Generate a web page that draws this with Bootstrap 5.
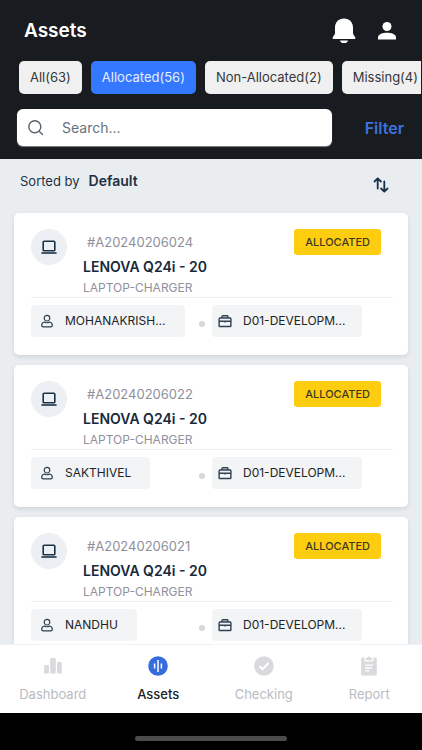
<!DOCTYPE html>
<html lang="en">
<head>
<meta charset="utf-8">
<meta name="viewport" content="width=device-width, initial-scale=1">
<title>Assets</title>
<link href="https://cdn.jsdelivr.net/npm/bootstrap@5.3.0/dist/css/bootstrap.min.css" rel="stylesheet">
<style>
body { font-family: Inter, "Liberation Sans", sans-serif; background: #e9edf0; color: #1d3144; }
.app-header { background: #181b1f; padding: 16px 0 13px; }
.app-title { font-size: 19px; font-weight: 600; line-height: 28px; color: #fff; }
.title-row { padding: 0 25px 0 24px; height: 29px; }
.title-actions { gap: 18px; }
.tabs { gap: 9px; padding: 0 0 0 19px; margin: 16px 1px 15px 0; overflow-x: auto; scrollbar-width: none; }
.tabs::-webkit-scrollbar { display: none; }
.tab { height: 33px; padding: 0 11px; border: 0; border-radius: 5px; background: #f0f0f0; color: #35373a; font-size: 13px; white-space: nowrap; flex: none; }
.tab.selected { background: #3478ff; color: #e6eeff; }
.search-row { padding: 0 18px 0 17px; }
.search-box { height: 37px; background: #fff; border-radius: 6px; padding: 0 10px; box-shadow: 0 1px 1px #7d8889; }
.search-box input { border: 0; outline: 0; width: 100%; min-width: 0; padding: 0; margin-left: 18px; font-size: 14px; color: #535b65; background: transparent; }
.search-box input::placeholder { color: #69717b; opacity: 1; }
.filter-link { font-size: 16px; font-weight: 600; color: #3f72dd; text-decoration: none; margin-left: 33px; }
.sort-row { padding: 11px 33px 19px 20px; font-size: 13px; }
.sort-row strong { font-size: 14px; font-weight: 600; margin-left: 9px; }
.sort-button { padding-top: 6px; }
.asset-list { min-height: 0; overflow: hidden; }
.cards { gap: 10px; padding: 0 14px; }
.asset { background: #fff; border-radius: 5px; padding: 16px 15px 18px 17px; box-shadow: 0 2px 4px #cfd5da; }
.device { width: 36px; height: 36px; background: #ecf0f5; border-radius: 50%; margin-right: 16px; }
.asset-id { font-size: 13px; line-height: 26px; color: #90909d; padding-left: 4px; }
.asset-name { font-size: 14px; line-height: 23px; font-weight: 600; margin: 0; color: #17293a; }
.asset-kind { font-size: 12px; line-height: 19px; color: #90909d; }
.state { height: 26px; padding: 0 11px; margin-right: 12px; border-radius: 3px; background: #ffcd10; color: #3b3a20; font-size: 11px; font-weight: 500; }
.asset-foot { border-top: 1px solid #eceef0; padding-top: 7px; }
.person-cell { width: 168px; }
.chip { height: 32px; border-radius: 4px; background: #f3f4f6; color: #202429; font-size: 12px; padding: 0 19px 0 9px; }
.chip svg { margin-right: 11px; color: #2c4054; }
.dept { padding: 0 16px 0 6px; }
.dot { width: 6px; height: 6px; margin: 6px 7px 0 0; border-radius: 50%; background: #d8d8d8; }
.bottom-nav { background: #fff; border-top: 1px solid #f0f1f3; height: 69px; }
.bottom-nav a { color: #b9bbc1; font-size: 13px; line-height: 20px; text-decoration: none; padding-top: 11px; gap: 8px; flex: 1 1 0; }
.bottom-nav a.current { color: #202226; font-weight: 500; }
.home-area { background: #000; height: 37px; padding-top: 13px; }
.home-bar { width: 36%; height: 5px; border-radius: 3px; background: #4b4b4b; }
</style>
</head>
<body>
<svg class="d-none" aria-hidden="true">
  <symbol id="laptop" viewBox="0 0 16 14"><path d="M2.200 10V2.200q0-1 1-1h9.600q1 0 1 1V10q0 .8-1 .8H3.200q-1 0-1-.8z" fill="none" stroke="currentColor" stroke-width="1.600"/><path d="M.4 13h15.200" stroke="currentColor" stroke-width="1.600"/></symbol>
  <symbol id="person" viewBox="0 0 14 14"><circle cx="7" cy="4.200" r="2.800" fill="none" stroke="currentColor" stroke-width="1.200"/><path d="M4.600 8C2.800 8.400 1.700 9.500 1.700 10.900c0 1.100.8 1.900 1.900 1.900h6.800c1.100 0 1.900-.8 1.900-1.900 0-1.400-1.100-2.500-2.900-2.900Q7 9.500 4.600 8z" fill="none" stroke="currentColor" stroke-width="1.200"/></symbol>
  <symbol id="briefcase" viewBox="0 0 14 14"><path d="M1.900 4h10.200q.8 0 .8.800v6.900q0 .8-.8.800H1.900q-.8 0-.8-.8V4.800q0-.8.800-.8zM4 3.800V2.600q0-.9.900-.9h4.200q.9 0 .9.900v1.200M1.200 7.200h11.600M7 6.600v2" fill="none" stroke="currentColor" stroke-width="1.400"/></symbol>
</svg>
<div class="d-flex flex-column vh-100">
  <header class="app-header">
    <div class="title-row d-flex align-items-center justify-content-between">
      <h1 class="app-title mb-0">Assets</h1>
      <div class="title-actions d-flex align-items-center">
        <button class="btn p-0 border-0 d-flex" aria-label="Notifications"><svg width="30" height="28" viewBox="0 0 30 28" fill="#fff"><path d="M15 1.500c-5.500 0-9 3.900-9 8.900v5.600c0 2.300-2.400 3.300-2.400 5 0 .7.500 1 1.200 1h20.400c.7 0 1.200-.3 1.200-1 0-1.700-2.400-2.700-2.400-5v-5.600c0-5-3.500-8.900-9-8.900zM10.900 23.500h8.200c-.4 1.700-2 2.600-4.100 2.600s-3.700-.9-4.100-2.600z"/></svg></button>
        <button class="btn p-0 border-0 d-flex" aria-label="Profile"><svg width="20" height="20" viewBox="0 0 20 20" fill="#fff"><circle cx="10" cy="5.500" r="4.500"/><path d="M1 18.500v-2.200c0-3.200 5-4.600 9-4.600s9 1.400 9 4.600v2.200z"/></svg></button>
      </div>
    </div>
    <div class="tabs d-flex">
      <button class="tab">All(63)</button>
      <button class="tab selected">Allocated(56)</button>
      <button class="tab">Non-Allocated(2)</button>
      <button class="tab">Missing(4)</button>
    </div>
    <div class="search-row d-flex align-items-center">
      <label class="search-box d-flex align-items-center flex-grow-1">
        <svg class="flex-shrink-0" width="17" height="17" viewBox="0 0 17 17" fill="none" stroke="#59616b" stroke-width="1.400"><circle cx="7.800" cy="7.800" r="6"/><path d="M12.200 12.200l3.300 3.300" stroke-linecap="round"/></svg>
        <input type="text" placeholder="Search..." aria-label="Search">
      </label>
      <a class="filter-link" href="#">Filter</a>
    </div>
  </header>
  <main class="asset-list flex-grow-1">
    <div class="sort-row d-flex">
      <div class="me-auto">Sorted by<strong>Default</strong></div>
      <button class="sort-button btn px-0 pb-0 border-0 d-flex" aria-label="Change sort order"><svg width="16" height="18" viewBox="0 0 16 18" fill="none" stroke="#17304c" stroke-width="1.800" stroke-linecap="round" stroke-linejoin="round"><path d="M4.700 12.500V2.500M1.500 5.500l3.200-3.200 3.200 3.200M11.300 5.500v10M8.100 12.500l3.200 3.200 3.200-3.200"/></svg></button>
    </div>
    <div class="cards d-flex flex-column">
      <article class="asset">
        <div class="d-flex align-items-start">
          <div class="device d-flex align-items-center justify-content-center"><svg width="16" height="14"><use href="#laptop"/></svg></div>
          <div class="me-auto"><div class="asset-id">#A20240206024</div><h2 class="asset-name">LENOVA Q24i - 20</h2><div class="asset-kind">LAPTOP-CHARGER</div></div>
          <span class="state d-flex align-items-center">ALLOCATED</span>
        </div>
        <div class="asset-foot d-flex align-items-center">
          <div class="person-cell d-flex"><span class="chip d-flex align-items-center"><svg width="14" height="14"><use href="#person"/></svg>MOHANAKRISH...</span></div>
          <span class="dot"></span>
          <span class="chip dept d-flex align-items-center"><svg width="14" height="14"><use href="#briefcase"/></svg>D01-DEVELOPM...</span>
        </div>
      </article>
      <article class="asset">
        <div class="d-flex align-items-start">
          <div class="device d-flex align-items-center justify-content-center"><svg width="16" height="14"><use href="#laptop"/></svg></div>
          <div class="me-auto"><div class="asset-id">#A20240206022</div><h2 class="asset-name">LENOVA Q24i - 20</h2><div class="asset-kind">LAPTOP-CHARGER</div></div>
          <span class="state d-flex align-items-center">ALLOCATED</span>
        </div>
        <div class="asset-foot d-flex align-items-center">
          <div class="person-cell d-flex"><span class="chip d-flex align-items-center"><svg width="14" height="14"><use href="#person"/></svg>SAKTHIVEL</span></div>
          <span class="dot"></span>
          <span class="chip dept d-flex align-items-center"><svg width="14" height="14"><use href="#briefcase"/></svg>D01-DEVELOPM...</span>
        </div>
      </article>
      <article class="asset">
        <div class="d-flex align-items-start">
          <div class="device d-flex align-items-center justify-content-center"><svg width="16" height="14"><use href="#laptop"/></svg></div>
          <div class="me-auto"><div class="asset-id">#A20240206021</div><h2 class="asset-name">LENOVA Q24i - 20</h2><div class="asset-kind">LAPTOP-CHARGER</div></div>
          <span class="state d-flex align-items-center">ALLOCATED</span>
        </div>
        <div class="asset-foot d-flex align-items-center">
          <div class="person-cell d-flex"><span class="chip d-flex align-items-center"><svg width="14" height="14"><use href="#person"/></svg>NANDHU</span></div>
          <span class="dot"></span>
          <span class="chip dept d-flex align-items-center"><svg width="14" height="14"><use href="#briefcase"/></svg>D01-DEVELOPM...</span>
        </div>
      </article>
    </div>
  </main>
  <nav class="bottom-nav d-flex flex-shrink-0">
    <a href="#" class="d-flex flex-column align-items-center"><svg width="20" height="20" viewBox="0 0 20 20" fill="#dadade"><rect x="1.200" y="9" width="4.800" height="8.500" rx="1.200"/><rect x="7.200" y="2" width="5.600" height="15.500" rx="1.200"/><rect x="14" y="6" width="4.800" height="11.500" rx="1.200"/></svg>Dashboard</a>
    <a href="#" class="current d-flex flex-column align-items-center" aria-current="page"><svg width="20" height="20" viewBox="0 0 20 20"><circle cx="10" cy="10" r="9.800" fill="#356ddf"/><path d="M10 4v12M6.600 7.500v5M13.400 7.500v5" stroke="#fff" stroke-width="1.500"/></svg>Assets</a>
    <a href="#" class="d-flex flex-column align-items-center"><svg width="20" height="20" viewBox="0 0 20 20"><circle cx="10" cy="10" r="9.800" fill="#dadade"/><path d="M5.500 10.300l3 3 6-6.300" fill="none" stroke="#fff" stroke-width="2"/></svg>Checking</a>
    <a href="#" class="d-flex flex-column align-items-center"><svg width="20" height="20" viewBox="0 0 20 20"><path d="M3.500 1.500h13q1.300 0 1.300 1.300v15.400q0 1.300-1.300 1.300h-13q-1.300 0-1.300-1.300V2.800q0-1.300 1.300-1.300z" fill="#dadade"/><path d="M5.500 0h9v4.500q0 1-1 1h-7q-1 0-1-1z" fill="#fff"/><path d="M6.800 1.700h1.500a1.800 1.800 0 0 1 3.400 0h1.500v2.500H6.800z" fill="#dadade"/><path d="M6 9.200h8M6 12h7M6 14.800h4.500" stroke="#fff" stroke-width="1.300"/></svg>Report</a>
  </nav>
  <div class="home-area flex-shrink-0 d-flex justify-content-center align-items-center"><div class="home-bar"></div></div>
</div>
<script src="https://cdn.jsdelivr.net/npm/bootstrap@5.3.0/dist/js/bootstrap.bundle.min.js"></script>
</body>
</html>
